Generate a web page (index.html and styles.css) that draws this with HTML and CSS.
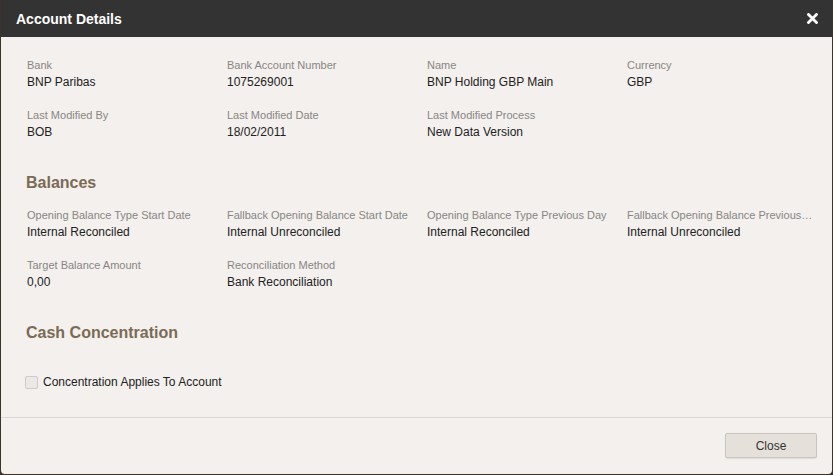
FILE: index.html
```html
<!DOCTYPE html>
<html>
<head>
<meta charset="utf-8">
<link rel="stylesheet" href="styles.css">
</head>
<body>
<div class="modal">
  <div class="modal-header">
    <span class="modal-title">Account Details</span>
    <button class="close-x" aria-label="Close">
      <svg width="11" height="11" viewBox="0 0 11 11"><path d="M1.5 1.5 L9.5 9.5 M9.5 1.5 L1.5 9.5" stroke="#fff" stroke-width="2.8" stroke-linecap="square"/></svg>
    </button>
  </div>
  <div class="modal-body">
    <div class="grid">
      <div class="field"><div class="label">Bank</div><div class="value">BNP Paribas</div></div>
      <div class="field"><div class="label">Bank Account Number</div><div class="value">1075269001</div></div>
      <div class="field"><div class="label">Name</div><div class="value">BNP Holding GBP Main</div></div>
      <div class="field"><div class="label">Currency</div><div class="value">GBP</div></div>
      <div class="field"><div class="label">Last Modified By</div><div class="value">BOB</div></div>
      <div class="field"><div class="label">Last Modified Date</div><div class="value">18/02/2011</div></div>
      <div class="field"><div class="label">Last Modified Process</div><div class="value">New Data Version</div></div>
    </div>
    <h2 class="section-title">Balances</h2>
    <div class="grid">
      <div class="field"><div class="label">Opening Balance Type Start Date</div><div class="value">Internal Reconciled</div></div>
      <div class="field"><div class="label">Fallback Opening Balance Start Date</div><div class="value">Internal Unreconciled</div></div>
      <div class="field"><div class="label">Opening Balance Type Previous Day</div><div class="value">Internal Reconciled</div></div>
      <div class="field"><div class="label" title="Fallback Opening Balance Previous Day">Fallback Opening Balance Previous…</div><div class="value">Internal Unreconciled</div></div>
      <div class="field"><div class="label">Target Balance Amount</div><div class="value">0,00</div></div>
      <div class="field"><div class="label">Reconciliation Method</div><div class="value">Bank Reconciliation</div></div>
    </div>
    <h2 class="section-title">Cash Concentration</h2>
    <label class="check-row"><span class="checkbox"></span><span class="check-label">Concentration Applies To Account</span></label>
  </div>
  <div class="modal-footer">
    <button class="btn">Close</button>
  </div>
</div>
</body>
</html>
```
FILE: styles.css
```css
html, body {
  margin: 0;
  padding: 0;
  height: 100%;
}
body {
  background: #3b342c;
  font-family: "Liberation Sans", Arial, sans-serif;
}
.modal {
  margin: 0 1px;
  height: 474px;
  display: flex;
  flex-direction: column;
  background: #f3f0ed;
  border-radius: 0 0 4px 4px;
  overflow: hidden;
}
.modal-header {
  height: 37px;
  background: #333333;
  display: flex;
  align-items: center;
  justify-content: space-between;
  padding: 0 14px 0 15px;
  box-sizing: border-box;
  flex: none;
}
.modal-title {
  color: #fff;
  font-weight: bold;
  font-size: 14px;
}
.close-x {
  background: none;
  border: 0;
  padding: 0;
  width: 11px;
  height: 11px;
  display: flex;
  cursor: pointer;
}
.modal-body {
  flex: 1;
  padding: 20px 26px 0;
  border-bottom: 1px solid #dcd8d4;
}
.grid {
  display: grid;
  grid-template-columns: repeat(4, 200px);
  row-gap: 17px;
}
.field {
  min-width: 0;
  padding-right: 10px;
}
.label {
  font-size: 11px;
  line-height: 16px;
  color: #888683;
  white-space: nowrap;
}
.value {
  margin-top: 1px;
  font-size: 12px;
  line-height: 16px;
  color: #222;
  white-space: nowrap;
}
.section-title {
  margin: 33px 0 14px -1px;
  font-size: 16px;
  line-height: 20px;
  font-weight: bold;
  color: #7b6b55;
}
.check-row {
  display: flex;
  align-items: center;
  margin-top: 31px;
  margin-left: -2px;
}
.checkbox {
  width: 11px;
  height: 11px;
  border: 1px solid #cfcbc7;
  background: #ebe8e5;
  border-radius: 2px;
  margin-right: 5px;
}
.check-label {
  font-size: 12px;
  line-height: 16px;
  color: #222;
}
.modal-footer {
  flex: none;
  height: 56px;
  box-sizing: border-box;
  padding: 15px 15px 0 0;
  display: flex;
  justify-content: flex-end;
  align-items: flex-start;
}
.btn {
  width: 92px;
  height: 25px;
  background: #e6e0da;
  border: 1px solid #c9c4bf;
  border-radius: 2px;
  font-family: "Liberation Sans", Arial, sans-serif;
  font-size: 12px;
  color: #333;
  cursor: pointer;
  box-shadow: 0 1px 1px rgba(0,0,0,0.08);
}
```
